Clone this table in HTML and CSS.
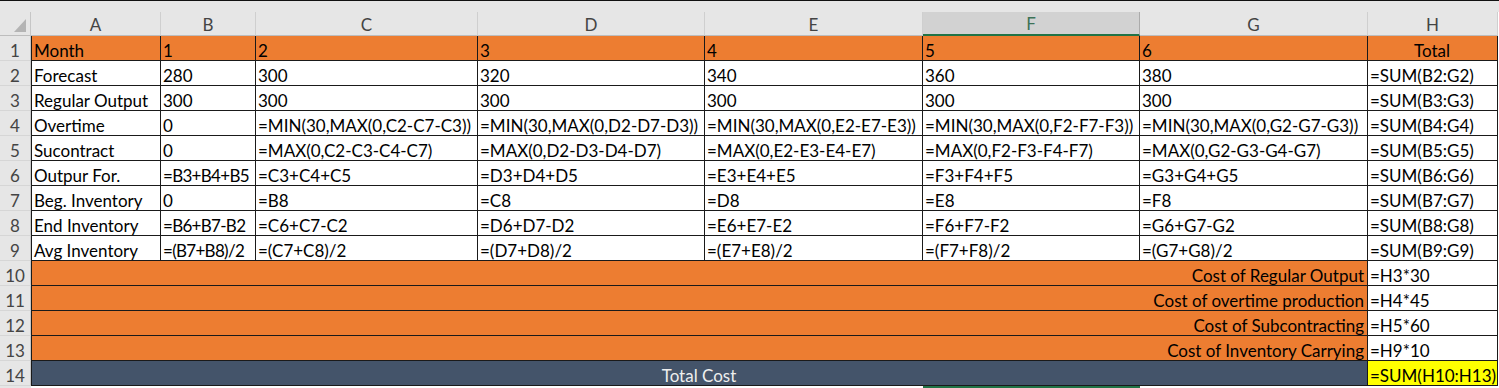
FILE: index.html
```html
<!DOCTYPE html>
<html>
<head>
<meta charset="utf-8">
<link rel="stylesheet" href="styles.css">
</head>
<body>
<div class="topline"></div>
<div class="band"></div>
<div class="sheet">
  <div class="h corner"><svg width="31" height="24" viewBox="0 0 31 24"><polygon points="26,7 26,20 14,20" fill="#b4b4b4"/></svg></div>
  <div class="h">A</div><div class="h">B</div><div class="h">C</div><div class="h">D</div><div class="h">E</div><div class="h sel">F</div><div class="h">G</div><div class="h">H</div>

  <div class="r">1</div>
  <div class="c o first">Month</div><div class="c o">1</div><div class="c o">2</div><div class="c o">3</div><div class="c o">4</div><div class="c o">5</div><div class="c o">6</div><div class="c o ctr">Total</div>

  <div class="r">2</div>
  <div class="c first">Forecast</div><div class="c">280</div><div class="c">300</div><div class="c">320</div><div class="c">340</div><div class="c">360</div><div class="c">380</div><div class="c">=SUM(B2:G2)</div>

  <div class="r">3</div>
  <div class="c first">Regular Output</div><div class="c">300</div><div class="c">300</div><div class="c">300</div><div class="c">300</div><div class="c">300</div><div class="c">300</div><div class="c">=SUM(B3:G3)</div>

  <div class="r">4</div>
  <div class="c first">Overtime</div><div class="c">0</div><div class="c">=MIN(30,MAX(0,C2-C7-C3))</div><div class="c">=MIN(30,MAX(0,D2-D7-D3))</div><div class="c">=MIN(30,MAX(0,E2-E7-E3))</div><div class="c">=MIN(30,MAX(0,F2-F7-F3))</div><div class="c">=MIN(30,MAX(0,G2-G7-G3))</div><div class="c">=SUM(B4:G4)</div>

  <div class="r">5</div>
  <div class="c first">Sucontract</div><div class="c">0</div><div class="c">=MAX(0,C2-C3-C4-C7)</div><div class="c">=MAX(0,D2-D3-D4-D7)</div><div class="c">=MAX(0,E2-E3-E4-E7)</div><div class="c">=MAX(0,F2-F3-F4-F7)</div><div class="c">=MAX(0,G2-G3-G4-G7)</div><div class="c">=SUM(B5:G5)</div>

  <div class="r">6</div>
  <div class="c first">Outpur For.</div><div class="c tight">=B3+B4+B5</div><div class="c">=C3+C4+C5</div><div class="c">=D3+D4+D5</div><div class="c">=E3+E4+E5</div><div class="c">=F3+F4+F5</div><div class="c">=G3+G4+G5</div><div class="c">=SUM(B6:G6)</div>

  <div class="r">7</div>
  <div class="c first">Beg. Inventory</div><div class="c">0</div><div class="c">=B8</div><div class="c">=C8</div><div class="c">=D8</div><div class="c">=E8</div><div class="c">=F8</div><div class="c">=SUM(B7:G7)</div>

  <div class="r">8</div>
  <div class="c first">End Inventory</div><div class="c tight">=B6+B7-B2</div><div class="c">=C6+C7-C2</div><div class="c">=D6+D7-D2</div><div class="c">=E6+E7-E2</div><div class="c">=F6+F7-F2</div><div class="c">=G6+G7-G2</div><div class="c">=SUM(B8:G8)</div>

  <div class="r">9</div>
  <div class="c first">Avg Inventory</div><div class="c tight">=(B7+B8)/2</div><div class="c">=(C7+C8)/2</div><div class="c">=(D7+D8)/2</div><div class="c">=(E7+E8)/2</div><div class="c">=(F7+F8)/2</div><div class="c">=(G7+G8)/2</div><div class="c">=SUM(B9:G9)</div>

  <div class="r">10</div>
  <div class="c o first merged right">Cost of Regular Output</div><div class="c">=H3*30</div>

  <div class="r">11</div>
  <div class="c o first merged right">Cost of overtime production</div><div class="c">=H4*45</div>

  <div class="r">12</div>
  <div class="c o first merged right">Cost of Subcontracting</div><div class="c">=H5*60</div>

  <div class="r">13</div>
  <div class="c o first merged right">Cost of Inventory Carrying</div><div class="c">=H9*10</div>

  <div class="r">14</div>
  <div class="c dk first merged ctr">Total Cost</div><div class="c yl">=SUM(H10:H13)</div>

  <div class="strip rowhead-strip"></div>
  <div class="strip span-ae"></div>
  <div class="strip green"></div>
</div>
</body>
</html>
```

FILE: styles.css
```css
html, body {
  margin: 0;
  padding: 0;
  background: #ffffff;
}
body {
  width: 1499px;
  height: 388px;
  overflow: hidden;
  font-family: Lato, "Liberation Sans", sans-serif;
  font-size: 17px;
  color: #000;
}
.topline {
  height: 1px;
  background: #111;
}
.band {
  height: 11px;
  background: #e6e6e6;
}
.sheet {
  display: grid;
  grid-template-columns: 31px 130px 95px 222px 227px 218px 217px 228px 130px;
  grid-template-rows: 24px repeat(14, 25px) 2px;
}
.h {
  background: #e6e6e6;
  color: #444;
  text-align: center;
  line-height: 23px;
  padding-top: 1px;
  border-right: 1px solid #cfcfcf;
  border-bottom: 1px solid #bdbdbd;
  box-sizing: border-box;
  overflow: hidden;
  font-size: 17px;
}
.corner {
  border-right: 1px solid #c6c6c6;
  line-height: 0;
  padding-top: 0;
}
.h.sel {
  background: #d2d2d2;
  color: #3d7257;
  border-bottom: 2px solid #217346;
  border-right-color: #ababab;
  line-height: 22px;
}
.r {
  background: #e6e6e6;
  color: #444;
  text-align: center;
  line-height: 24px;
  padding-top: 3px;
  overflow: hidden;
  border-right: 1px solid #c6c6c6;
  border-bottom: 1px solid #d6d6d6;
  box-sizing: border-box;
}
.c {
  box-sizing: border-box;
  border-right: 1px solid #1a1a1a;
  border-bottom: 1px solid #1a1a1a;
  padding: 3px 3px 0 2px;
  line-height: 24px;
  white-space: nowrap;
  overflow: hidden;
  background: #fff;
}
.c.first {
  border-left: 1px solid #1a1a1a;
}
.c.tight {
  letter-spacing: -0.7px;
}
.o {
  background: #ed7d31;
}
.ctr {
  text-align: center;
}
.right {
  text-align: right;
}
.merged {
  grid-column: 2 / 9;
}
.dk {
  background: #44546a;
  color: #eeeeee;
}
.yl {
  background: #ffff00;
}
.strip {
  height: 2px;
  background: #ffffff;
}
.rowhead-strip {
  background: #e6e6e6;
}
.span-ae {
  grid-column: 2 / 7;
}
.green {
  background: #217346;
}
```
